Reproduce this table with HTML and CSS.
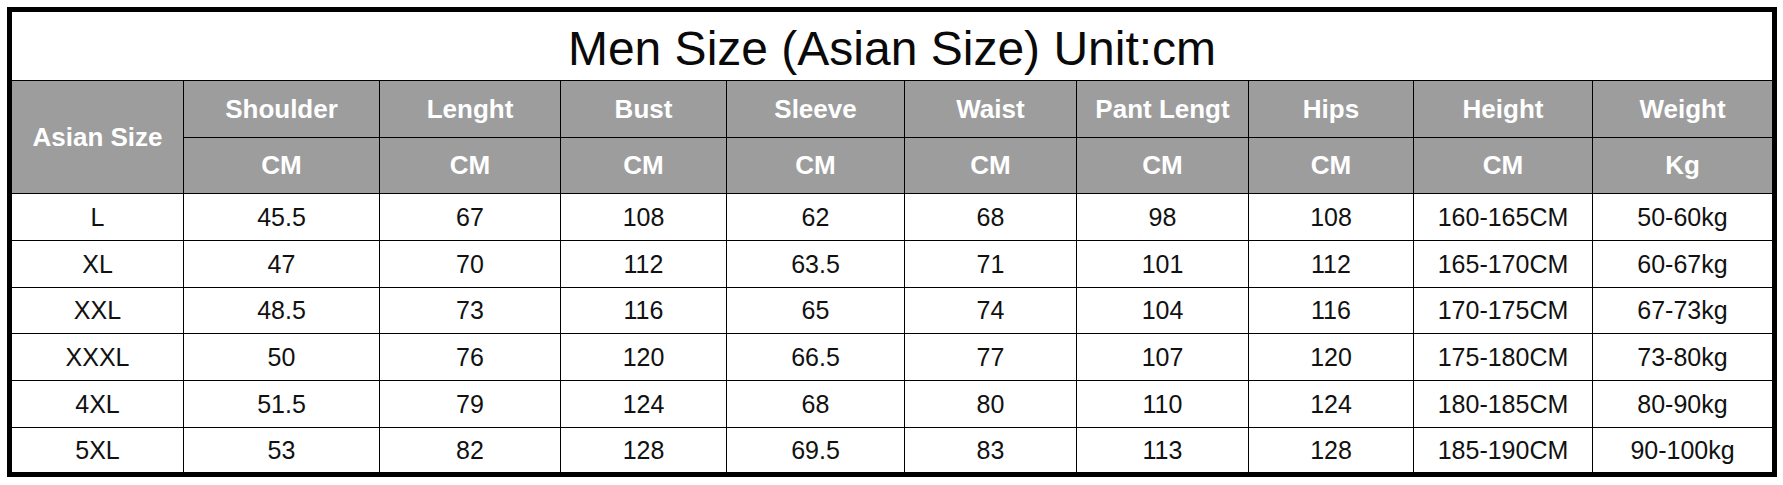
FILE: index.html
```html
<!DOCTYPE html>
<html lang="en">
<head>
<meta charset="utf-8">
<title>Men Size (Asian Size) Unit:cm</title>
<link rel="stylesheet" href="styles.css">
</head>
<body>
<div class="chart">
  <div class="grid">
    <div class="title">Men Size (Asian Size) Unit:cm</div>

    <div class="hd hd-size">Asian Size</div>
    <div class="hd">Shoulder</div>
    <div class="hd">Lenght</div>
    <div class="hd">Bust</div>
    <div class="hd">Sleeve</div>
    <div class="hd">Waist</div>
    <div class="hd">Pant Lengt</div>
    <div class="hd">Hips</div>
    <div class="hd">Height</div>
    <div class="hd">Weight</div>

    <div class="hd unit">CM</div>
    <div class="hd unit">CM</div>
    <div class="hd unit">CM</div>
    <div class="hd unit">CM</div>
    <div class="hd unit">CM</div>
    <div class="hd unit">CM</div>
    <div class="hd unit">CM</div>
    <div class="hd unit">CM</div>
    <div class="hd unit">Kg</div>

    <div class="cell">L</div><div class="cell">45.5</div><div class="cell">67</div><div class="cell">108</div><div class="cell">62</div><div class="cell">68</div><div class="cell">98</div><div class="cell">108</div><div class="cell">160-165CM</div><div class="cell">50-60kg</div>
    <div class="cell">XL</div><div class="cell">47</div><div class="cell">70</div><div class="cell">112</div><div class="cell">63.5</div><div class="cell">71</div><div class="cell">101</div><div class="cell">112</div><div class="cell">165-170CM</div><div class="cell">60-67kg</div>
    <div class="cell">XXL</div><div class="cell">48.5</div><div class="cell">73</div><div class="cell">116</div><div class="cell">65</div><div class="cell">74</div><div class="cell">104</div><div class="cell">116</div><div class="cell">170-175CM</div><div class="cell">67-73kg</div>
    <div class="cell">XXXL</div><div class="cell">50</div><div class="cell">76</div><div class="cell">120</div><div class="cell">66.5</div><div class="cell">77</div><div class="cell">107</div><div class="cell">120</div><div class="cell">175-180CM</div><div class="cell">73-80kg</div>
    <div class="cell">4XL</div><div class="cell">51.5</div><div class="cell">79</div><div class="cell">124</div><div class="cell">68</div><div class="cell">80</div><div class="cell">110</div><div class="cell">124</div><div class="cell">180-185CM</div><div class="cell">80-90kg</div>
    <div class="cell">5XL</div><div class="cell">53</div><div class="cell">82</div><div class="cell">128</div><div class="cell">69.5</div><div class="cell">83</div><div class="cell">113</div><div class="cell">128</div><div class="cell">185-190CM</div><div class="cell">90-100kg</div>
  </div>
</div>
</body>
</html>
```

FILE: styles.css
```css
html, body {
  margin: 0;
  padding: 0;
  background: #ffffff;
}

body {
  font-family: "Liberation Sans", Arial, sans-serif;
  color: #111111;
}

.chart {
  margin: 7px 0 0 7px;
  width: 1760px;
  border: 5px solid #000000;
}

.grid {
  display: grid;
  grid-template-columns: 171px 195px 180px 165px 177px 171px 171px 164px 178px 179px;
  grid-template-rows: 68px 56px 55px 46px 46px 45px 46px 46px 44px;
  gap: 1px;
  background: #000000;
}

.title {
  grid-column: 1 / -1;
  background: #ffffff;
  display: flex;
  align-items: center;
  justify-content: center;
  padding-top: 5px;
  font-size: 48px;
  color: #0a0a0a;
  white-space: nowrap;
}

.hd {
  background: #9d9d9d;
  color: #ffffff;
  font-weight: bold;
  font-size: 26px;
  display: flex;
  align-items: center;
  justify-content: center;
  white-space: nowrap;
}

.hd-size {
  grid-row: span 2;
}

.cell {
  background: #ffffff;
  font-size: 25px;
  display: flex;
  align-items: center;
  justify-content: center;
  white-space: nowrap;
}
```
